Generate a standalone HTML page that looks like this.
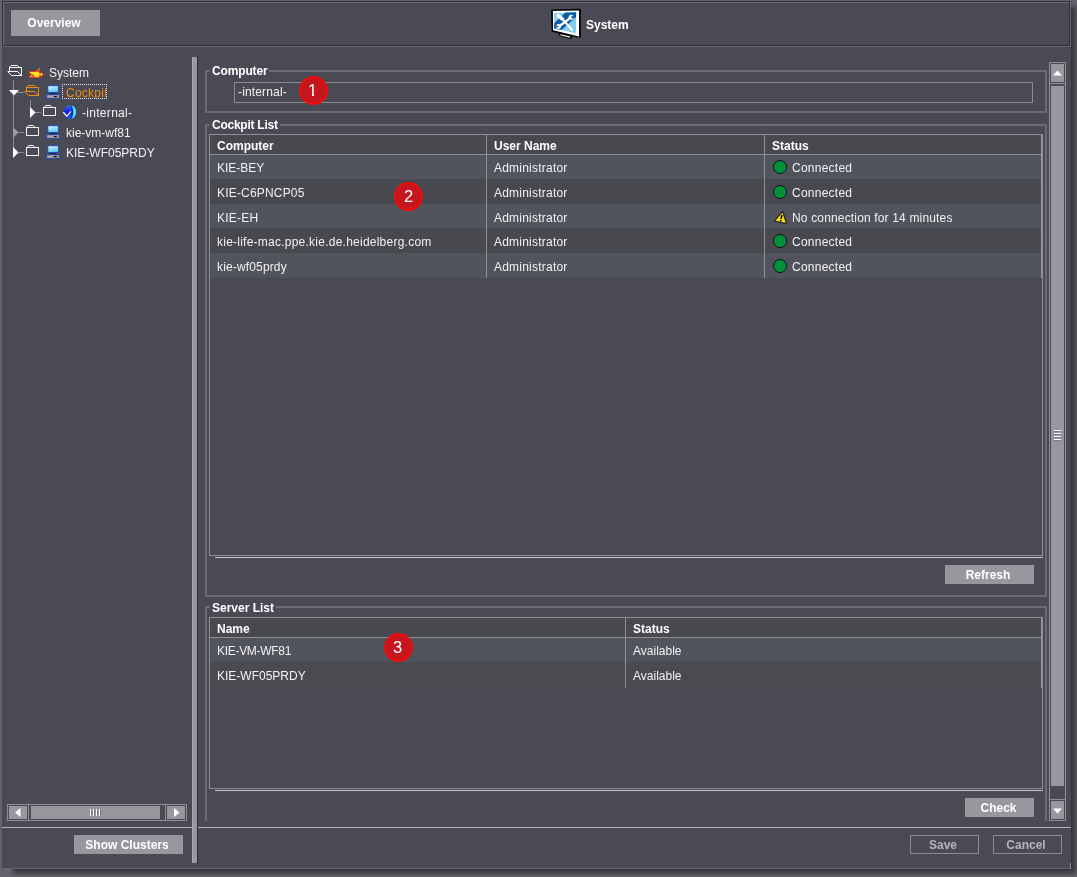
<!DOCTYPE html>
<html><head><meta charset="utf-8"><title>System</title>
<style>
*{box-sizing:border-box;margin:0;padding:0}
html,body{width:1077px;height:877px;overflow:hidden;background:#63636b;font-family:"Liberation Sans",sans-serif;font-size:12px;color:#f2f2f2}
.abs{position:absolute}
#win{will-change:transform;position:absolute;left:2px;top:0;width:1069px;height:869px;background:#4a4a54;}
#win div,#win span,#win svg{position:absolute}
.btn{background:#97989d;color:#fff;font-weight:bold;text-align:center;white-space:nowrap}
.obtn{border:1px solid #8b8b93;color:#b4b4bc;font-weight:bold;text-align:center}
.fs{border:2px solid #6b6b75}
.lg{background:#4a4a54;font-weight:bold;color:#fff;white-space:nowrap;height:14px;line-height:14px;padding:0 2px 0 2px}
.t{white-space:nowrap;height:14px;line-height:14px}
.b{font-weight:bold;color:#fff}
.ln{background:#8f8f96}
.hl{background:#b4b4b8}
.badge{width:29px;height:29px;border-radius:50%;background:#c4161c;border:2px solid #f00c0c;color:#fff;font-size:16.5px;line-height:25px;text-align:center}
.r1{background:#51535d}
.r2{background:#48484f}
</style></head><body>
<div class="abs" style="left:1071px;top:3px;width:6px;height:866px;background:linear-gradient(to right,rgba(50,50,55,1),rgba(50,50,55,.28));-webkit-mask-image:linear-gradient(to bottom,transparent 0,#000 7px);mask-image:linear-gradient(to bottom,transparent 0,#000 7px)"></div>
<div class="abs" style="left:9px;top:869px;width:1062px;height:8px;background:linear-gradient(to bottom,rgba(50,50,55,1),rgba(50,50,55,0));-webkit-mask-image:linear-gradient(to right,transparent 0,#000 8px);mask-image:linear-gradient(to right,transparent 0,#000 8px)"></div>
<div class="abs" style="left:1071px;top:869px;width:6px;height:8px;background:radial-gradient(circle at 0 0,rgba(50,50,55,1) 0,rgba(50,50,55,0) 8px)"></div>
<div id="win">
<!-- header -->
<div style="left:0;top:0;width:1069px;height:1px;background:#63636b"></div>
<div style="left:1px;top:2px;width:1068px;height:45px;border:1px solid #6c6c76"></div>
<div style="left:0;top:1px;width:1068px;height:45px;border:1px solid #2f2f35"></div>
<div style="left:0;top:868px;width:1069px;height:1px;background:#666670"></div>
<div style="left:1068px;top:863px;width:1px;height:6px;background:#8a8a92"></div>
<div class="btn" style="left:9px;top:10px;width:89px;height:26px;line-height:26px;padding-right:3px">Overview</div>
<svg style="left:546px;top:6px" width="36" height="36" viewBox="0 0 36 36">
<path d="M3.6 4 L32.3 3.2 L32.3 31.4 L24.4 29.8 L23 32.6 L11.6 29.6 L11 26.9 L4.1 25.4 Z" fill="#050505" stroke="#050505" stroke-width="1" stroke-linejoin="round"/>
<path d="M4.9 4.9 L31 4.5 L31 30.6 L5.1 24.2Z" fill="#fff"/>
<path d="M6.2 7 L28.1 6.2 L28.1 27.3 L6.2 22.4Z" fill="#86cfee"/>
<path d="M6.2 17.2 L17.6 6.6 L28.1 6.2 L28.1 11.1 L13.5 23.9 L6.2 22.4Z" fill="#0b5da4"/>
<path d="M12.4 28.2 L22.3 30.6 L22 31.7 L12.2 29.3Z" fill="#fff"/>
<g stroke="#fff" stroke-linecap="round" fill="none">
<path d="M10.2 9.6 L14.2 12.8" stroke-width="3.6"/>
<path d="M14.2 12.8 L24 24" stroke-width="2.1"/>
<path d="M11.2 20.2 L22.8 11.6" stroke-width="2.4"/>
</g>
<circle cx="10.4" cy="20.4" r="2.5" fill="#fff"/><circle cx="23.2" cy="11.2" r="2.5" fill="#fff"/>
<path d="M8 19.4 L10.6 19.9 L10.2 21.3 L7.8 21.6Z" fill="#0b5da4"/>
<path d="M25.8 9.6 L23.2 10.6 L23.6 12 L26 12.4Z" fill="#0b5da4"/>
</svg>
<span class="t b" style="left:584px;top:18px">System</span>
<!-- left tree placeholder -->
<!-- tree -->
<div style="left:11px;top:80px;width:1px;height:73px;background:#8b8b92"></div>
<div style="left:11px;top:92px;width:11px;height:1px;background:#8b8b92"></div>
<div style="left:28px;top:100px;width:1px;height:13px;background:#8b8b92"></div>
<div style="left:28px;top:112px;width:11px;height:1px;background:#8b8b92"></div>
<div style="left:11px;top:132px;width:11px;height:1px;background:#8b8b92"></div>
<div style="left:11px;top:152px;width:11px;height:1px;background:#8b8b92"></div>
<svg style="left:7px;top:90px" width="10" height="6"><path d="M0 0 H10 L5 5.5Z" fill="#fff"/></svg>
<svg style="left:28px;top:107px" width="6" height="11"><path d="M0 0 V11 L5.5 5.5Z" fill="#fff"/></svg>
<svg style="left:11px;top:127px" width="6" height="11"><path d="M0 0 V11 L5.5 5.5Z" fill="#9a9aa0"/></svg>
<svg style="left:11px;top:147px" width="6" height="11"><path d="M0 0 V11 L5.5 5.5Z" fill="#fff"/></svg>
<svg style="left:5px;top:65px" width="16" height="12" viewBox="0 0 16 12"><g fill="none" stroke="#f4f4f4" stroke-width="1"><path d="M2.5 6 V2.5 H14.5 V10.5 M4.5 10.5 H14.5 M0.8 6.5 H10.5" shape-rendering="crispEdges"/><path d="M2.5 2 L4 0.5 H10.4 L12 2 M10.3 6.4 L14.5 10.5 M0.6 6.6 L4.5 10.5"/></g></svg>
<svg style="left:24px;top:64px" width="20" height="16" viewBox="26 64 20 16"><path d="M29 71 H36.3 L39.3 67.9 L40.5 69 L38.6 71 H40.2 V73 L41.6 71.9 L43.8 74.4 L41.6 77 L40.2 75.9 V78.1 H32.4 L31.7 77.2 L30.6 78.1 H29 V75.6 L30.9 74.4 L29 73.2 Z" fill="#e63a1e"/><path d="M30 72 H39.1 V73.7 H41 L41.3 72.9 L42.9 74.4 L41.3 76 L41 75.1 H39.1 V76.9 H34.3 V74.6 H33 L30 72.9 Z" fill="#ffe62a"/><path d="M30 77 L33.6 74.8" stroke="#ffd42a" stroke-width="1.1" stroke-dasharray="1.1 0.5" fill="none"/><path d="M36.5 71.6 L39.6 68.6" stroke="#ffd42a" stroke-width="1" stroke-dasharray="1.1 0.5" fill="none"/></svg>
<span class="t" style="left:47px;top:66px">System</span>
<svg style="left:22px;top:85px" width="16" height="12" viewBox="0 0 16 12"><g fill="none" stroke="#f08a10" stroke-width="1"><path d="M2.5 6 V2.5 H14.5 V10.5 M4.5 10.5 H14.5 M0.8 6.5 H10.5" shape-rendering="crispEdges"/><path d="M2.5 2 L4 0.5 H10.4 L12 2 M10.3 6.4 L14.5 10.5 M0.6 6.6 L4.5 10.5"/></g></svg>
<svg style="left:44px;top:85px" width="15" height="15" viewBox="0 0 15 15"><defs><linearGradient id="g1" x1="0" y1="0" x2="0.3" y2="1"><stop offset="0" stop-color="#e4f8ff"/><stop offset="1" stop-color="#58c8f4"/></linearGradient></defs><rect x="3.4" y="7.8" width="7.4" height="2" fill="#0c1c58"/><rect x="1.7" y="0.6" width="10.8" height="7" fill="url(#g1)" stroke="#2a50a8" stroke-width="1.2"/><rect x="0.6" y="9.6" width="12.9" height="3.9" fill="#a2a2a8" stroke="#2a4aa0" stroke-width="1.1"/><rect x="7.8" y="11" width="2.8" height="1.2" fill="#080808"/><rect x="10.6" y="11" width="1.1" height="1.2" fill="#f01818"/></svg>
<div style="left:60px;top:84px;width:45px;height:15px;border:1px dotted #e8e8e8;overflow:hidden"><span class="t" style="left:3px;top:1px;color:#f08a10;letter-spacing:0.25px">Cockpit</span></div>
<svg style="left:40px;top:105px" width="15" height="12" viewBox="0 0 15 12"><g fill="none" stroke="#f4f4f4" stroke-width="1"><rect x="1.5" y="2.5" width="12" height="8" shape-rendering="crispEdges"/><path d="M2.5 2 L3.7 0.5 H8.3 L9.5 2"/></g></svg>
<svg style="left:61px;top:104px" width="15" height="16" viewBox="0 0 15 16"><defs><linearGradient id="bg1" x1="0" y1="0" x2="0" y2="1"><stop offset="0" stop-color="#3a78f8"/><stop offset="0.45" stop-color="#0c24e4"/><stop offset="1" stop-color="#2a58e8"/></linearGradient></defs><ellipse cx="7.2" cy="8.2" rx="6" ry="7" fill="url(#bg1)"/><path d="M8.2 1.6 C14.8 2.6 14.8 13.6 8.2 14.9 C10.6 11 10.6 5.5 8.2 1.6Z" fill="#48e4ff"/><path d="M8 1.8 C10.2 5.5 10.2 10.8 8 14.6" fill="none" stroke="#0a1878" stroke-width="1"/><path d="M0.4 8.2 L3.9 12.3 L8 7.2" fill="none" stroke="#0818c8" stroke-width="2.6"/><path d="M0.3 8.3 L3.9 12.3 L7.9 7.4" fill="none" stroke="#fff" stroke-width="1.3"/></svg>
<span class="t" style="left:80px;top:106px;letter-spacing:0.3px">-internal-</span>
<svg style="left:23px;top:125px" width="15" height="12" viewBox="0 0 15 12"><g fill="none" stroke="#f4f4f4" stroke-width="1"><rect x="1.5" y="2.5" width="12" height="8" shape-rendering="crispEdges"/><path d="M2.5 2 L3.7 0.5 H8.3 L9.5 2"/></g></svg>
<svg style="left:44px;top:125px" width="15" height="15" viewBox="0 0 15 15"><defs><linearGradient id="g2" x1="0" y1="0" x2="0.3" y2="1"><stop offset="0" stop-color="#e4f8ff"/><stop offset="1" stop-color="#58c8f4"/></linearGradient></defs><rect x="3.4" y="7.8" width="7.4" height="2" fill="#0c1c58"/><rect x="1.7" y="0.6" width="10.8" height="7" fill="url(#g2)" stroke="#2a50a8" stroke-width="1.2"/><rect x="0.6" y="9.6" width="12.9" height="3.9" fill="#a2a2a8" stroke="#2a4aa0" stroke-width="1.1"/><rect x="7.8" y="11" width="2.8" height="1.2" fill="#080808"/><rect x="10.6" y="11" width="1.1" height="1.2" fill="#f01818"/></svg>
<span class="t" style="left:64px;top:126px">kie-vm-wf81</span>
<svg style="left:23px;top:145px" width="15" height="12" viewBox="0 0 15 12"><g fill="none" stroke="#f4f4f4" stroke-width="1"><rect x="1.5" y="2.5" width="12" height="8" shape-rendering="crispEdges"/><path d="M2.5 2 L3.7 0.5 H8.3 L9.5 2"/></g></svg>
<svg style="left:44px;top:145px" width="15" height="15" viewBox="0 0 15 15"><defs><linearGradient id="g3" x1="0" y1="0" x2="0.3" y2="1"><stop offset="0" stop-color="#e4f8ff"/><stop offset="1" stop-color="#58c8f4"/></linearGradient></defs><rect x="3.4" y="7.8" width="7.4" height="2" fill="#0c1c58"/><rect x="1.7" y="0.6" width="10.8" height="7" fill="url(#g3)" stroke="#2a50a8" stroke-width="1.2"/><rect x="0.6" y="9.6" width="12.9" height="3.9" fill="#a2a2a8" stroke="#2a4aa0" stroke-width="1.1"/><rect x="7.8" y="11" width="2.8" height="1.2" fill="#080808"/><rect x="10.6" y="11" width="1.1" height="1.2" fill="#f01818"/></svg>
<span class="t" style="left:64px;top:146px">KIE-WF05PRDY</span>
<!-- h scrollbar -->
<div style="left:5px;top:804px;width:180px;height:17px;border:1px solid #8f8f96"></div>
<div style="left:7px;top:806px;width:18px;height:13px;background:#97989d"></div>
<div class="ln" style="left:26px;top:805px;width:1px;height:15px"></div>
<div style="left:29px;top:806px;width:129px;height:13px;background:#97989d"></div>
<div class="ln" style="left:163px;top:805px;width:1px;height:15px"></div>
<div style="left:165px;top:806px;width:18px;height:13px;background:#97989d"></div>
<svg style="left:13px;top:808px" width="6" height="9"><path d="M5.5 0 V9 L0 4.5Z" fill="#fff"/></svg>
<svg style="left:172px;top:808px" width="6" height="9"><path d="M0 0 V9 L5.5 4.5Z" fill="#fff"/></svg>
<div style="left:88px;top:809px;width:1px;height:7px;background:#fff;box-shadow:1px 0 0 #767c8c,3px 0 0 #fff,4px 0 0 #767c8c,6px 0 0 #fff,7px 0 0 #767c8c,9px 0 0 #fff,10px 0 0 #767c8c"></div>
<!-- Computer fieldset -->
<div class="fs" style="left:203px;top:70px;width:842px;height:43px"></div>
<span class="lg" style="left:208px;top:64px;letter-spacing:-0.15px">Computer</span>
<div style="left:232px;top:82px;width:799px;height:21px;border:1px solid #8b8b93"></div>
<span class="t" style="left:236px;top:85px;letter-spacing:0.15px">-internal-</span>
<!-- Cockpit list fieldset -->
<div class="fs" style="left:203px;top:124px;width:842px;height:473px"></div>
<span class="lg" style="left:208px;top:118px;letter-spacing:-0.25px">Cockpit List</span>
<div style="left:207px;top:134px;width:834px;height:422px;border:1px solid #8f8f96"></div>
<div class="hl" style="left:213px;top:557px;width:828px;height:1px;background:#c6c6ca"></div>
<div class="r2" style="left:208px;top:135px;width:832px;height:19px"></div>
<div class="r1" style="left:208px;top:155px;width:832px;height:24px"></div>
<div class="r2" style="left:208px;top:179px;width:832px;height:25px"></div>
<div class="r1" style="left:208px;top:204px;width:832px;height:24px"></div>
<div class="r2" style="left:208px;top:228px;width:832px;height:25px"></div>
<div class="r1" style="left:208px;top:253px;width:832px;height:25px"></div>
<div class="ln" style="left:208px;top:154px;width:832px;height:1px"></div>
<div class="ln" style="left:484px;top:135px;width:1px;height:143px"></div>
<div class="ln" style="left:762px;top:135px;width:1px;height:143px"></div>
<div class="ln" style="left:1039px;top:135px;width:1px;height:143px;background:#9a9aa2"></div>
<span class="t b" style="left:215px;top:139px">Computer</span>
<span class="t b" style="left:492px;top:139px">User Name</span>
<span class="t b" style="left:770px;top:139px">Status</span>
<span class="t" style="left:215px;top:161px">KIE-BEY</span>
<span class="t" style="left:492px;top:161px;letter-spacing:0.22px">Administrator</span>
<div style="left:770.6px;top:159.5px;width:14.6px;height:14.6px;border-radius:50%;background:radial-gradient(circle at 40% 45%,#00903a 0,#00903a 60%,#2cae5c 100%);border:1.5px solid #101014"></div>
<span class="t" style="left:790px;top:161px;letter-spacing:0.25px">Connected</span>
<span class="t" style="left:215px;top:186px;letter-spacing:0.18px">KIE-C6PNCP05</span>
<span class="t" style="left:492px;top:186px;letter-spacing:0.22px">Administrator</span>
<div style="left:770.6px;top:184.5px;width:14.6px;height:14.6px;border-radius:50%;background:radial-gradient(circle at 40% 45%,#00903a 0,#00903a 60%,#2cae5c 100%);border:1.5px solid #101014"></div>
<span class="t" style="left:790px;top:186px;letter-spacing:0.25px">Connected</span>
<span class="t" style="left:215px;top:211px;letter-spacing:0.23px">KIE-EH</span>
<span class="t" style="left:492px;top:211px;letter-spacing:0.22px">Administrator</span>
<svg style="left:772px;top:210px;transform:rotate(11deg)" width="15" height="14" viewBox="0 0 15 14"><path d="M7.5 1.2 L13.8 12.5 L1.2 12.5Z" fill="#f5e11a" stroke="#2a2a20" stroke-width="1.3" stroke-linejoin="round"/><path d="M7.5 4.8 V9" stroke="#111" stroke-width="1.6"/><circle cx="7.5" cy="10.8" r="0.9" fill="#111"/></svg>
<span class="t" style="left:790px;top:211px;letter-spacing:0.16px">No connection for 14 minutes</span>
<span class="t" style="left:215px;top:235px;letter-spacing:0.24px">kie-life-mac.ppe.kie.de.heidelberg.com</span>
<span class="t" style="left:492px;top:235px;letter-spacing:0.22px">Administrator</span>
<div style="left:770.6px;top:233.5px;width:14.6px;height:14.6px;border-radius:50%;background:radial-gradient(circle at 40% 45%,#00903a 0,#00903a 60%,#2cae5c 100%);border:1.5px solid #101014"></div>
<span class="t" style="left:790px;top:235px;letter-spacing:0.25px">Connected</span>
<span class="t" style="left:215px;top:260px;letter-spacing:0.15px">kie-wf05prdy</span>
<span class="t" style="left:492px;top:260px;letter-spacing:0.22px">Administrator</span>
<div style="left:770.6px;top:258.5px;width:14.6px;height:14.6px;border-radius:50%;background:radial-gradient(circle at 40% 45%,#00903a 0,#00903a 60%,#2cae5c 100%);border:1.5px solid #101014"></div>
<span class="t" style="left:790px;top:260px;letter-spacing:0.25px">Connected</span>
<div class="btn" style="left:943px;top:565px;width:89px;height:19px;line-height:21px;padding-right:3px">Refresh</div>
<!-- Server list fieldset -->
<div class="fs" style="left:203px;top:606px;width:842px;height:215px;border-bottom:none"></div>
<span class="lg" style="left:208px;top:601px">Server List</span>
<div style="left:207px;top:617px;width:834px;height:172px;border:1px solid #8f8f96"></div>
<div class="hl" style="left:213px;top:790px;width:828px;height:1px;background:#c6c6ca"></div>
<div class="r2" style="left:208px;top:618px;width:832px;height:19px"></div>
<div class="r1" style="left:208px;top:638px;width:832px;height:24px"></div>
<div class="r2" style="left:208px;top:662px;width:832px;height:26px;background:#4a4a51"></div>
<div class="ln" style="left:208px;top:637px;width:832px;height:1px"></div>
<div class="ln" style="left:623px;top:618px;width:1px;height:70px"></div>
<div class="ln" style="left:1039px;top:618px;width:1px;height:70px;background:#9a9aa2"></div>
<span class="t b" style="left:215px;top:622px">Name</span>
<span class="t b" style="left:631px;top:622px">Status</span>
<span class="t" style="left:215px;top:644px;letter-spacing:-0.3px">KIE-VM-WF81</span>
<span class="t" style="left:631px;top:644px">Available</span>
<span class="t" style="left:215px;top:669px">KIE-WF05PRDY</span>
<span class="t" style="left:631px;top:669px">Available</span>
<div class="btn" style="left:963px;top:798px;width:69px;height:19px;line-height:21px;padding-right:2px">Check</div>
<!-- badges -->
<div class="badge" style="left:297px;top:76px;padding-right:2px">1<div style="left:5.5px;top:15.5px;width:5.5px;height:3.5px;background:#c4161c"></div><div style="left:13px;top:15.5px;width:4px;height:3.5px;background:#c4161c"></div></div>
<div class="badge" style="left:392px;top:182px">2</div>
<div class="badge" style="left:382px;top:633px;padding-right:2px">3</div>
<!-- vertical scrollbar -->
<div style="left:1047px;top:62px;width:17px;height:759px;border:1px solid #8f8f96"></div>
<div style="left:1049px;top:64px;width:13px;height:18px;background:#97989d"></div>
<div class="ln" style="left:1048px;top:83px;width:15px;height:1px"></div>
<div style="left:1049px;top:86px;width:13px;height:700px;background:#97989d"></div>
<div class="ln" style="left:1048px;top:799px;width:15px;height:1px"></div>
<div style="left:1049px;top:801px;width:13px;height:18px;background:#97989d"></div>
<svg style="left:1051px;top:70px" width="9" height="6"><path d="M0 5.5 L4.5 0.5 L9 5.5Z" fill="#fff"/></svg>
<svg style="left:1051px;top:808px" width="9" height="6"><path d="M0 0.5 L4.5 5.5 L9 0.5Z" fill="#fff"/></svg>
<div style="left:1052px;top:430px;width:7px;height:1px;background:#fff;box-shadow:0 1px 0 #767c8c,0 3px 0 #fff,0 4px 0 #767c8c,0 6px 0 #fff,0 7px 0 #767c8c,0 9px 0 #fff,0 10px 0 #767c8c"></div>
<!-- splitter -->
<div style="left:190px;top:57px;width:5px;height:806px;background:#97989d;border-left:1px solid #a8a8ae"></div>
<div style="left:195px;top:57px;width:1px;height:806px;background:#2c2c32"></div>
<!-- bottom separator -->
<div class="hl" style="left:0;top:827px;width:190px;height:1px"></div>
<div class="hl" style="left:196px;top:827px;width:873px;height:1px"></div>
<div class="btn" style="left:72px;top:835px;width:109px;height:19px;line-height:21px;padding-right:3px">Show Clusters</div>
<div class="obtn" style="left:908px;top:835px;width:69px;height:19px;line-height:19px;padding-right:3px">Save</div>
<div class="obtn" style="left:991px;top:835px;width:69px;height:19px;line-height:19px;padding-right:3px">Cancel</div>
</div>
</body></html>
